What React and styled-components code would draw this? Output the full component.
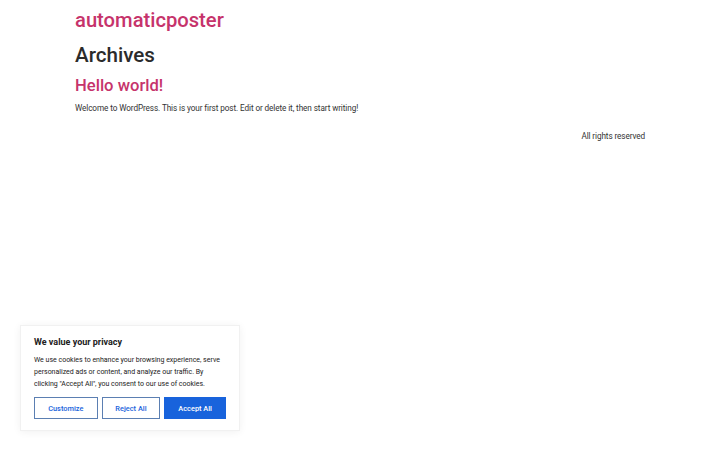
import React from "react";
import styled, { createGlobalStyle } from "styled-components";

const Global = createGlobalStyle`
  html, body {
    margin: 0;
    padding: 0;
    background: #fff;
    font-family: Roboto, "Liberation Sans", sans-serif;
    color: #2c2c2c;
  }
`;

const Page = styled.div`
  width: 720px;
  height: 450px;
  position: relative;
  overflow: hidden;
`;

const Main = styled.main`
  width: 570px;
  margin: 0 auto 0 75px;
  padding-top: 6px;
`;

const SiteTitle = styled.h1`
  margin: 0;
  font-size: 20.2px;
  font-weight: 500;
  line-height: 28px;
  color: #c6336b;
`;

const PageTitle = styled.h2`
  margin: 7px 0 0;
  font-size: 20.6px;
  font-weight: 500;
  line-height: 28px;
  color: #2b2b2b;
`;

const PostTitle = styled.h3`
  margin: 6px 0 0;
  font-size: 16.6px;
  font-weight: 500;
  line-height: 22px;
  color: #c6336b;
`;

const Excerpt = styled.p`
  margin: 5px 0 0;
  font-size: 8.2px;
  letter-spacing: -0.1px;
  line-height: 12px;
  color: #333;
`;

const Footer = styled.footer`
  margin-top: 16px;
  text-align: right;
  font-size: 8.2px;
  letter-spacing: -0.1px;
  line-height: 12px;
  color: #333;
`;

const Banner = styled.div`
  position: absolute;
  left: 20px;
  top: 325px;
  width: 220px;
  box-sizing: border-box;
  padding: 10px 13px 11px;
  background: #fff;
  border: 1px solid #f1f1f1;
  box-shadow: 0 1px 8px rgba(0, 0, 0, 0.06);
`;

const BannerTitle = styled.div`
  font-size: 9px;
  font-weight: 700;
  line-height: 12px;
  color: #212121;
`;

const BannerText = styled.p`
  margin: 6px 0 0;
  width: 190px;
  font-size: 7px;
  line-height: 12px;
  color: #212121;
`;

const Buttons = styled.div`
  display: flex;
  gap: 4px;
  margin-top: 7px;
`;

const Btn = styled.button`
  flex: ${(p) => p.$w} 0 0;
  height: 22px;
  box-sizing: border-box;
  font-family: Roboto, "Liberation Sans", sans-serif;
  font-size: 7.4px;
  font-weight: 500;
  border: 1.5px solid;
  border-color: ${(p) => (p.$primary ? "#1863dc" : "#5b7fb2")};
  background: ${(p) => (p.$primary ? "#1863dc" : "#fff")};
  color: ${(p) => (p.$primary ? "#fff" : "#1863dc")};
  padding: 0;
  cursor: pointer;
`;

export default function App() {
  return (
    <Page>
      <Global />
      <Main>
        <SiteTitle>automaticposter</SiteTitle>
        <PageTitle>Archives</PageTitle>
        <PostTitle>Hello world!</PostTitle>
        <Excerpt>
          Welcome to WordPress. This is your first post. Edit or delete it, then
          start writing!
        </Excerpt>
        <Footer>All rights reserved</Footer>
      </Main>
      <Banner>
        <BannerTitle>We value your privacy</BannerTitle>
        <BannerText>
          We use cookies to enhance your browsing experience, serve personalized
          ads or content, and analyze our traffic. By clicking "Accept All", you
          consent to our use of cookies.
        </BannerText>
        <Buttons>
          <Btn $w={64}>Customize</Btn>
          <Btn $w={59}>Reject All</Btn>
          <Btn $w={62} $primary>Accept All</Btn>
        </Buttons>
      </Banner>
    </Page>
  );
}
